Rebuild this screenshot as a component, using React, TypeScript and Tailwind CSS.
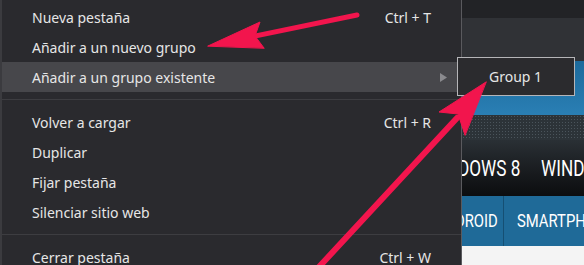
import React from 'react';

type Item = { label: string; shortcut?: string; active?: boolean; sub?: boolean } | 'sep';

const items: Item[] = [
  { label: 'Nueva pestaña', shortcut: 'Ctrl + T' },
  { label: 'Añadir a un nuevo grupo' },
  { label: 'Añadir a un grupo existente', active: true, sub: true },
  'sep',
  { label: 'Volver a cargar', shortcut: 'Ctrl + R' },
  { label: 'Duplicar' },
  { label: 'Fijar pestaña' },
  { label: 'Silenciar sitio web' },
  'sep',
  { label: 'Cerrar pestaña', shortcut: 'Ctrl + W' },
];

function Backdrop() {
  // the web page behind the menu
  return (
    <div className="absolute inset-0 flex flex-col bg-[#25262a]">
      <div className="h-[18px] bg-[#222326]" />
      <div className="h-[43px] bg-[#303236]" />
      <div className="h-[54px] bg-gradient-to-b from-[#1c6a9c] to-[#2a7fb4]" />
      <div className="h-[25px] bg-[#2c3338] bg-[radial-gradient(#4a545b_1px,transparent_1px)] bg-[length:3px_3px]" />
      <div className="h-[56px] bg-gradient-to-b from-[#2a3035] to-[#0c0d0f] flex items-center pl-[462px] text-white text-[22px] font-['Roboto',sans-serif] overflow-hidden whitespace-nowrap">
        <span className="inline-block scale-x-[0.78] origin-left -ml-[4px] w-[60px]">DOWS 8</span>
        <span className="inline-block scale-x-[0.78] origin-left ml-[23px]">WIND</span>
      </div>
      <div className="h-[50px] bg-[#1f6a98] flex items-stretch pl-[462px] text-white text-[19px] font-['Roboto',sans-serif] overflow-hidden whitespace-nowrap">
        <div className="w-[42px] flex items-center border-r border-[#154f73]">
          <span className="inline-block scale-x-[0.78] origin-left -ml-[7px]">DROID</span>
        </div>
        <div className="flex items-center pl-[13px]">
          <span className="inline-block scale-x-[0.78] origin-left">SMARTPH</span>
        </div>
      </div>
      <div className="flex-1 bg-[#f4f4f4]" />
    </div>
  );
}

function Arrows() {
  return (
    <svg className="absolute inset-0 pointer-events-none" width="584" height="265" viewBox="0 0 584 265">
      <g fill="#f2154d" stroke="#f2154d" strokeLinecap="round">
        <line x1="357" y1="15" x2="250" y2="37" strokeWidth="5" />
        <polygon points="208,46 260,22 255,36 264,48" strokeWidth="1" strokeLinejoin="round" />
        <line x1="318" y1="268" x2="457" y2="118" strokeWidth="6" />
        <polygon points="486,82 439,112 458,114 465,135" strokeWidth="1" strokeLinejoin="round" />
      </g>
    </svg>
  );
}

export default function App() {
  return (
    <div className="relative w-[584px] h-[265px] overflow-hidden font-['Noto_Sans',sans-serif]">
      <Backdrop />
      <div className="absolute left-0 top-0 w-[462px] h-[280px] bg-[#2a2a2e] border-l-[2px] border-l-[#3b3b3f] border-r border-r-[#5a5a5e] pt-[2px] text-[14px] text-[#e6e6e6]">
        {items.map((it, i) =>
          it === 'sep' ? (
            <div key={i} className="h-[15px] flex items-center">
              <div className="h-px w-full bg-[#3d3d41]" />
            </div>
          ) : (
            <div
              key={i}
              className={`h-[30px] flex items-center pl-[30px] pr-[30px] ${it.active ? 'bg-[#47474b]' : ''}`}
            >
              <span className="flex-1">{it.label}</span>
              {it.shortcut && <span>{it.shortcut}</span>}
              {it.sub && (
                <svg className="-mr-[17px]" width="8" height="9" viewBox="0 0 8 9">
                  <polygon points="0,0 7,4.5 0,9" fill="#8a8a8e" />
                </svg>
              )}
            </div>
          )
        )}
      </div>
      <div className="absolute left-[457px] top-[57px] w-[118px] h-[39px] bg-[#2b2b2e] border border-[#b5b5b8] flex items-center pl-[31px] text-[14px] text-[#e6e6e6]">
        Group 1
      </div>
      <Arrows />
    </div>
  );
}
